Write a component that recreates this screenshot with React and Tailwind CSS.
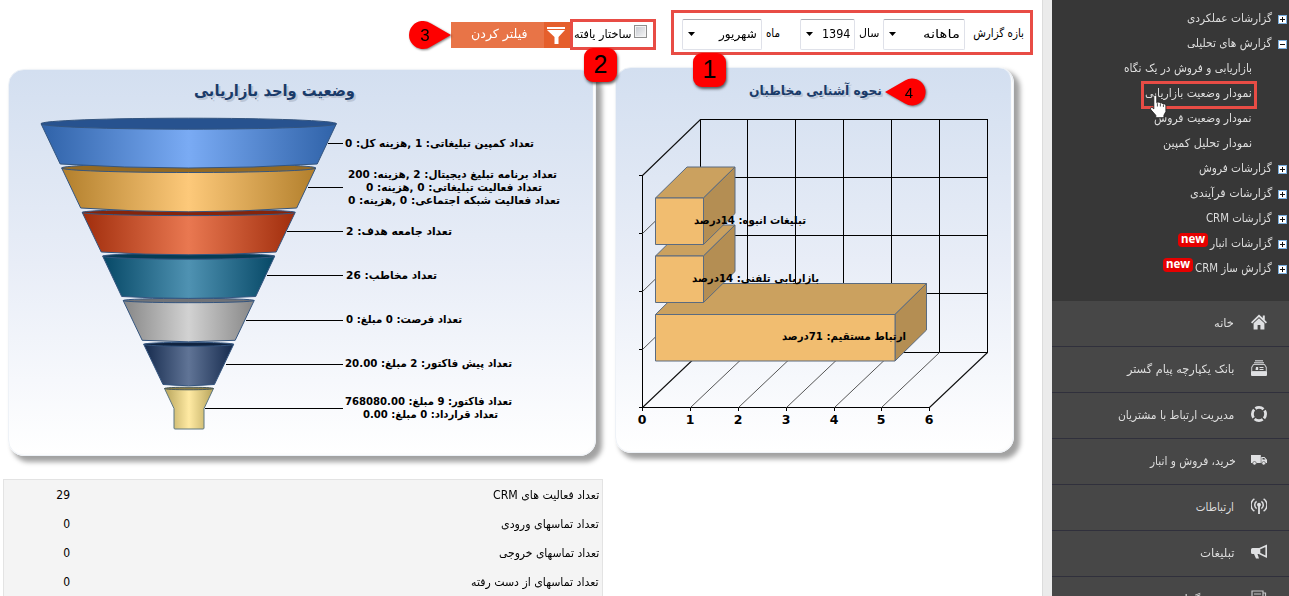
import { useLayoutEffect, useRef, useState } from "react";

function Fit({ w, className = "", children }) {
  const ref = useRef(null);
  const [s, setS] = useState(1);
  useLayoutEffect(() => {
    setS(w / ref.current.offsetWidth);
  }, [w]);
  return (
    <span dir="rtl" className="flex shrink-0 justify-start" style={{ width: w }}>
      <span
        ref={ref}
        className={"inline-block shrink-0 origin-right whitespace-nowrap " + className}
        style={{ transform: `scaleX(${s})` }}
      >
        {children}
      </span>
    </span>
  );
}

function Select({ className, textW, children }) {
  return (
    <div dir="ltr" className={"flex h-[31px] items-center justify-between rounded-[2px] border border-[#dfe1e9] border-t-[#a9abb3] bg-white pl-[5px] pr-[4px] " + className}>
      <svg width="7" height="4" viewBox="0 0 7 4"><path d="M0 0h7L3.500 4z" /></svg>
      <Fit w={textW} className="text-[12px]">{children}</Fit>
    </div>
  );
}

function ToggleBox({ open }) {
  return (
    <svg width="9" height="9" viewBox="0 0 9 9" className="shrink-0" shapeRendering="crispEdges">
      <rect width="9" height="9" fill="#79aede" />
      <rect x="1" y="1" width="7" height="7" fill="#fff" />
      <path d={open ? "M2 4h5v1h-5z" : "M2 4h5v1h-5zM4 2h1v5h-1z"} fill="#111" />
    </svg>
  );
}

const tree = [
  { t: "گزارشات عملکردی", w: 85 },
  { t: "گزارش های تحلیلی", w: 85, open: true },
  { t: "بازاریابی و فروش در یک نگاه", w: 128, sub: true },
  { t: "نمودار وضعیت بازاریابی", w: 107, sub: true, hot: true },
  { t: "نمودار وضعیت فروش", w: 98, sub: true },
  { t: "نمودار تحلیل کمپین", w: 89, sub: true },
  { t: "گزارشات فروش", w: 73 },
  { t: "گزارشات فرآیندی", w: 82 },
  { t: "گزارشات CRM", w: 66 },
  { t: "گزارشات انبار", w: 62, isNew: true },
  { t: "گزارش ساز CRM", w: 77, isNew: true },
];

function TreeRow({ item }) {
  return (
    <div dir="rtl" className={"relative flex h-[25px] items-center " + (item.sub ? "pr-[37px]" : "pr-[2px]")}>
      {!item.sub && <span className="ml-[6px] flex pt-[3px]"><ToggleBox open={item.open} /></span>}
      <Fit w={item.w} className="text-[11.500px] leading-[20px]">{item.t}</Fit>
      {item.isNew && (
        <span className="-mt-[5px] mr-[2px] flex h-[14px] w-[30px] items-center justify-center rounded-[4px] bg-[#e60000] pb-[2px] font-['Noto_Sans','DejaVu_Sans',sans-serif] text-[11.500px] font-bold text-white">new</span>
      )}
      {item.hot && (
        <>
          <span className="absolute top-[1px] left-[89px] h-[28px] w-[116px] border-[3px] border-[#e84c45]" />
          <svg className="absolute left-[97px] top-[14px] z-10" width="19" height="25" viewBox="0 0 17 23">
            <path d="M4.500 1.500c1-.8 2.200-.3 2.400.9V8l1-.7 1.600.4.800.8 1.300-.4 1.200 1.200 1.200-.2 1.300 1.300v5.800l-1.800 3.300v2.300H6v-2.200L1.500 14.500c-.6-1.200-.2-2.300 1-2.300l1.700 1.500V2.200z" fill="#fff" stroke="#222" strokeWidth=".8" />
            <path d="M7.500 8.500v3M10.200 9v2.500M13 10v2" stroke="#333" strokeWidth=".8" />
          </svg>
        </>
      )}
    </div>
  );
}

const icons = {
  home: (
    <g fill="#dfe0e2">
      <path d="M8 .5 0 8.300l1.200 1.100L8 3l6.800 6.400L16 8.300 13.800 6V1.500h-2v2.600z" />
      <path d="M8 4.200 2.600 9.300V15.500h4V11h2.800v4.500h4V9.300z" />
    </g>
  ),
  bank: (
    <g>
      <path d="M4 .8h8M3 2.800h10" stroke="#b4b5b7" strokeWidth="1.400" />
      <path d="M2.500 4.500h11l1.800 3v4H.7v-4z" fill="none" stroke="#c5c6c8" strokeWidth="1.100" />
      <path d="M0 11.500h16V15q0 1-1 1H1q-1 0-1-1zM5 7h2.200v3H4.500zM8.500 7h4v1h-4zM8.500 9h4v1h-4z" fill="#dfe0e2" />
    </g>
  ),
  ring: <circle cx="8" cy="8" r="6.600" fill="none" stroke="#dfe0e2" strokeWidth="2.800" strokeDasharray="8.700 1.667" strokeDashoffset="4" />,
  truck: (
    <g fill="#dfe0e2">
      <path d="M0 3h9.800v8H0zM10.300 5h3.200L16 7.800V11h-5.700z" />
      <circle cx="3.500" cy="11.300" r="1.800" stroke="#474747" strokeWidth=".6" />
      <circle cx="12.700" cy="11.300" r="1.800" stroke="#474747" strokeWidth=".6" />
      <path d="M11.500 6h1.700l1.200 1.600h-2.900z" fill="#474747" />
    </g>
  ),
  signal: (
    <g fill="none" stroke="#dfe0e2" strokeWidth="1.500">
      <path d="M3.400 .8a7.400 7.400 0 0 0 0 12.400M12.600 .8a7.400 7.400 0 0 1 0 12.400M5.600 3.400a4.400 4.400 0 0 0 0 7.200M10.400 3.400a4.400 4.400 0 0 1 0 7.200" />
      <circle cx="8" cy="6.800" r="1.200" fill="#dfe0e2" />
      <path d="M8 7v9" strokeWidth="1.800" />
    </g>
  ),
  horn: (
    <g>
      <path d="M15.200 1.700v11L8.500 9.500V4.800z" fill="none" stroke="#dfe0e2" strokeWidth="1.600" />
      <path d="M8.500 4H1.500Q0 4 0 5.500v3Q0 10 1.500 10H3l2 4.500h3L6.500 10h2z" fill="#dfe0e2" />
    </g>
  ),
  news: (
    <g fill="none" stroke="#c5c6c8" strokeWidth="1.200">
      <path d="M1 1h11v14H1zM12 3h2.500v12H12" />
      <path d="M3 4h7M3 6.500h7M3 9h7" />
    </g>
  ),
};

const menu = [
  { t: "خانه", w: 20, icon: "home" },
  { t: "بانک یکپارچه پیام گستر", w: 107, icon: "bank" },
  { t: "مدیریت ارتباط با مشتریان", w: 116, icon: "ring" },
  { t: "خرید، فروش و انبار", w: 86, icon: "truck", near: true },
  { t: "ارتباطات", w: 38, icon: "signal" },
  { t: "تبلیغات", w: 34, icon: "horn" },
  { t: "فرم و گزارش", w: 70, icon: "news" },
];

function Sidebar() {
  return (
    <aside className="w-[237px] shrink-0 bg-[#474747] text-[#dedede]">
      <div className="h-[301px] bg-[#373737] pt-[5px]">
        {tree.map((i) => <TreeRow key={i.t} item={i} />)}
      </div>
      {menu.map((m) => (
        <div key={m.t} dir="rtl" className="flex h-[46px] items-center border-b border-[#30303c] pr-[22px]">
          <svg width="16" height="16" viewBox="0 0 16 16" className={"-mt-[3px] shrink-0 " + (m.near ? "ml-[15px]" : "ml-[17px]")}>{icons[m.icon]}</svg>
          <Fit w={m.w} className="text-[11.500px]">{m.t}</Fit>
        </div>
      ))}
    </aside>
  );
}

const cx = 188.7;
const segs = [
  { y: 123.700, r: 147.700, ry: 5.500, by: 164, br: 128.500, bry: 4, c: ["#2f62a8", "#7aabf4"], top: "#27528f" },
  { y: 168, r: 127, ry: 4.500, by: 208, br: 108, bry: 3.800, c: ["#b27f2c", "#fdc97a"], top: "#946a24" },
  { y: 212.400, r: 106.500, ry: 3.200, by: 252, br: 87.500, bry: 2.800, c: ["#a02d0c", "#e97851"], top: "#85240a" },
  { y: 256.200, r: 86, ry: 3, by: 296.500, br: 67, bry: 1.900, c: ["#064866", "#4f92b2"], top: "#053c55" },
  { y: 300.500, r: 65.500, ry: 2.200, by: 340.300, br: 46.500, bry: 1.500, c: ["#868686", "#d2d2d2"], top: "#707378" },
  { y: 344.300, r: 45, ry: 2, by: 384.500, br: 25.700, bry: 1.300, c: ["#152a4d", "#607496"], top: "#10233f" },
];

const labels = [
  ["تعداد کمپین تبلیغاتی: 1 ,هزینه کل: 0", 345, 534, 143],
  ["تعداد برنامه تبلیغ دیجیتال: 2 ,هزینه: 200", 348, 557, 174],
  ["تعداد فعالیت تبلیغاتی: 0 ,هزینه: 0", 366, 542, 187],
  ["تعداد فعالیت شبکه اجتماعی: 0 ,هزینه: 0", 348, 560, 200],
  ["تعداد جامعه هدف: 2", 346, 452, 231],
  ["تعداد مخاطب: 26", 346, 437, 275],
  ["تعداد فرصت: 0 مبلغ: 0", 346, 462, 319],
  ["تعداد پیش فاکتور: 2 مبلغ: 20.00", 345, 512, 363],
  ["تعداد فاکتور: 9 مبلغ: 768080.00", 345, 512, 401],
  ["تعداد قرارداد: 0 مبلغ: 0.00", 363, 498, 414],
];

function ChartText({ t, x1, x2, y, size = 11, ...rest }) {
  return (
    <text x={(x1 + x2) / 2} y={y} direction="rtl" textAnchor="middle" textLength={x2 - x1} lengthAdjust="spacingAndGlyphs" fontSize={size} fontWeight="bold" {...rest}>{t}</text>
  );
}

function Title({ t, x1, x2, y, size }) {
  return (
    <>
      <ChartText t={t} x1={x1 + 2} x2={x2 + 2} y={y + 2} size={size} fill="#bcc6d6" />
      <ChartText t={t} x1={x1} x2={x2} y={y} size={size} fill="#1a3b69" />
    </>
  );
}

const card = "rounded-[16px] border border-[#eef2f7] bg-linear-to-b from-[#d3dff0] via-[#e8edf7] to-white shadow-[inset_-2px_-2px_1px_#fdfdfd,5px_5px_5px_1px_#a2a2a2]";

function FunnelCard() {
  return (
    <div className={"ml-[8px] mt-[69px] h-[387px] w-[588px] shrink-0 " + card}>
      <svg className="-ml-px -mt-px block" width="588" height="386" viewBox="8 69 588 386">
        <defs>
          {segs.map((s, i) => (
            <linearGradient key={i} id={"f" + i}>
              <stop offset="0" stopColor={s.c[0]} /><stop offset=".5" stopColor={s.c[1]} /><stop offset="1" stopColor={s.c[0]} />
            </linearGradient>
          ))}
          <linearGradient id="f6"><stop offset="0" stopColor="#b7a45b" /><stop offset=".5" stopColor="#ffeaa3" /><stop offset="1" stopColor="#b7a45b" /></linearGradient>
        </defs>
        <Title t="وضعیت واحد بازاریابی" x1={194} x2={355} y={96} size={16} />
        <g stroke="#34557f" strokeWidth="1">
          <path d="M164.500 388.500L174 408.500V428q0 1 1 1H203q1 0 1-1V408.500L213.500 388.500z" fill="url(#f6)" stroke="#5d7680" />
          <ellipse cx="189" cy="388.500" rx="24.500" ry="1.300" fill="#867943" stroke="#4a5a5c" />
          {segs.map((s, i) => (
            <g key={i}>
              <path d={`M${cx - s.r} ${s.y}L${cx - s.br} ${s.by}Q${cx} ${s.by + 2 * s.bry} ${cx + s.br} ${s.by}L${cx + s.r} ${s.y}z`} fill={`url(#f${i})`} />
              <ellipse cx={cx} cy={s.y} rx={s.r} ry={s.ry} fill={s.top} />
            </g>
          )).reverse()}
        </g>
        <path d="M328 143.500H343M308 187.500H343M287 231.500H343M267 275.500H343M246 320.500H343M226 364.500H343M205 408.500H343" stroke="#000" />
        {labels.map((l) => <ChartText key={l[0]} t={l[0]} x1={l[1]} x2={l[2]} y={l[3] + 4} />)}
      </svg>
    </div>
  );
}

function Bar({ y, x2 }) {
  return (
    <g stroke="#5a6b80" strokeWidth="1">
      <path d={`M655.500 ${y}L687 ${y - 31}H${x2 + 31.5}L${x2} ${y}z`} fill="#cba15f" />
      <path d={`M${x2} ${y}l31.500-31v46.500l-31.500 31z`} fill="#b48e53" />
      <path d={`M655.500 ${y}H${x2}v46.500H655.500z`} fill="#f1bd70" />
    </g>
  );
}

const ticksX = [642.5, 690.5, 738.5, 786.5, 834.5, 881.5, 929.5];

function BarCard() {
  return (
    <div className={"ml-[19px] mt-[67px] h-[386px] w-[399px] shrink-0 " + card}>
      <svg className="-ml-px -mt-px block" width="398" height="385" viewBox="615 67 398 385">
        <Title t="نحوه آشنایی مخاطبان" x1={749} x2={882} y={95} size={13} />
        <g fill="none" stroke="#000" shapeRendering="crispEdges">
          <path d="M700.500 119.500H987.500V352.500H700.500zM747.500 119V352M795.500 119V352M843.500 119V352M891.500 119V352M939.500 119V352M700 177.500H988M700 235.500H988M700 293.500H988" />
          <path d="M642.500 175V407.500H930M639 175.500H643M639 233.500H643M639 291.500H643M639 349.500H643M639 407.500H643" />
          {ticksX.map((x) => <path key={x} d={`M${x} 407v4`} />)}
        </g>
        <g stroke="#555">
          {[233.5, 291.5, 349.5].map((y) => <path key={y} d={`M642.500 ${y}l58-56`} />)}
          {ticksX.slice(1, 6).map((x) => <path key={x} d={`M${x} 407.500l58-55`} />)}
        </g>
        <path d="M642.500 175.500L700.500 119.500M642.500 407.500L700.500 352.500M929.500 407.500L987.500 352.500" stroke="#111" strokeWidth="1.100" />
        <Bar y={314.5} x2={895} />
        <Bar y={256} x2={703.5} />
        <Bar y={198} x2={703.5} />
        <ChartText t="تبلیغات انبوه: 14درصد" x1={694} x2={806} y={224} />
        <ChartText t="بازاریابی تلفنی: 14درصد" x1={692} x2={819} y={282} />
        <ChartText t="ارتباط مستقیم: 71درصد" x1={782} x2={906} y={340} />
        {ticksX.map((x, i) => <text key={x} x={x - 0.5} y="424" textAnchor="middle" fontSize="12.500" fontFamily="DejaVu Sans" fontWeight="bold">{i}</text>)}
      </svg>
    </div>
  );
}

const stats = [
  ["تعداد فعالیت های CRM", 106, 29],
  ["تعداد تماسهای ورودی", 98, 0],
  ["تعداد تماسهای خروجی", 100, 0],
  ["تعداد تماسهای از دست رفته", 128, 0],
];

function Marker({ n, className }) {
  return (
    <span className={"absolute z-10 flex h-[34px] w-[33px] items-center justify-center rounded-[9px] bg-[#fe0000] font-['Liberation_Sans',sans-serif] text-[25px] text-black shadow-[1px_2px_3px_rgba(0,0,0,0.6)] " + className}>{n}</span>
  );
}

function Drop({ n, flip, className }) {
  return (
    <svg className={"absolute z-10 overflow-visible drop-shadow-[1px_1px_1px_rgba(0,0,0,0.5)] " + className} width="43" height="28" viewBox="0 0 43 28">
      <path d={flip ? "M0 14L20 2.500A13.500 13.500 0 1 1 20 25.500z" : "M43 14L23 2.500A14 14 0 1 0 23 25.500z"} fill="#fe0000" />
      <text x={flip ? 24 : 17} y="20" textAnchor="middle" fontSize={flip ? 15 : 17} fontFamily="Liberation Sans">{n}</text>
    </svg>
  );
}

export default function App() {
  return (
    <div className="flex h-[596px] w-[1289px] overflow-hidden bg-white font-['DejaVu_Sans_Condensed','DejaVu_Sans',sans-serif] text-[12px] text-black">
      <main className="relative w-[1042px] shrink-0">
        <div className="absolute left-[451px] top-[22px] flex h-[26px] w-[119px] text-white">
          <div className="flex w-[93px] items-center justify-center bg-[#e87447] pl-[2px] pb-px"><Fit w={57} className="text-[12.500px]">فیلتر کردن</Fit></div>
          <div className="flex flex-1 items-center justify-center bg-[#e55f2c] pr-[2px]">
            <svg width="18" height="17" viewBox="0 0 18 17" fill="#fff"><path d="M0 0h18v2H0zM0 3h18l-6.500 7v7H7.500v-7z" /></svg>
          </div>
        </div>
        <div className="absolute left-[570px] top-[19px] flex h-[31px] w-[86px] items-center border-[3px] border-[#e84c45] pl-px">
          <Fit w={57} className="text-[11.500px]">ساختار یافته</Fit>
          <span className="-mt-[6px] ml-[3px] h-[13px] w-[13px] border border-[#8e8f8f] bg-linear-to-br from-[#c4c8cf] to-[#f7f7f7] shadow-[inset_0_0_0_1px_#f3f3f3]" />
        </div>
        <div dir="rtl" className="absolute left-[671px] top-[10px] flex h-[45px] w-[362px] items-center border-[3px] border-[#e84c45] pr-[6px] pt-[3px]">
          <Fit w={51} className="text-[11.500px]">بازه گزارش</Fit>
          <Select className="mr-[8px] w-[82px]" textW={37}>ماهانه</Select>
          <span className="mr-[4px] flex"><Fit w={20} className="text-[11.500px]">سال</Fit></span>
          <Select className="mr-[4px] w-[55px]" textW={28}>1394</Select>
          <span className="mr-[20px] flex"><Fit w={14} className="text-[11.500px]">ماه</Fit></span>
          <Select className="mr-[4px] w-[80px]" textW={38}>شهریور</Select>
        </div>
        <Marker n="1" className="left-[693px] top-[53px]" />
        <Marker n="2" className="left-[584px] top-[48px]" />
        <Drop n="3" className="left-[408px] top-[21px]" />
        <Drop n="4" flip className="left-[885px] top-[78px]" />
        <div className="flex items-start">
          <FunnelCard />
          <BarCard />
        </div>
        <div dir="rtl" className="ml-[3px] mt-[23px] h-[130px] w-[600px] border border-[#e3e3e3] bg-[#f4f4f4] pt-[1px]">
          {stats.map(([t, w, v]) => (
            <div key={t} className="flex h-[29px] items-center justify-between pl-[52px] pr-[3px]">
              <Fit w={w} className="text-[11.500px]">{t}</Fit>
              <span className="w-[14px] pb-px text-[12px]">{v}</span>
            </div>
          ))}
        </div>
      </main>
      <div className="w-[10px] shrink-0 border-l border-[#dcdcdc] bg-[#ebebeb]" />
      <Sidebar />
    </div>
  );
}
